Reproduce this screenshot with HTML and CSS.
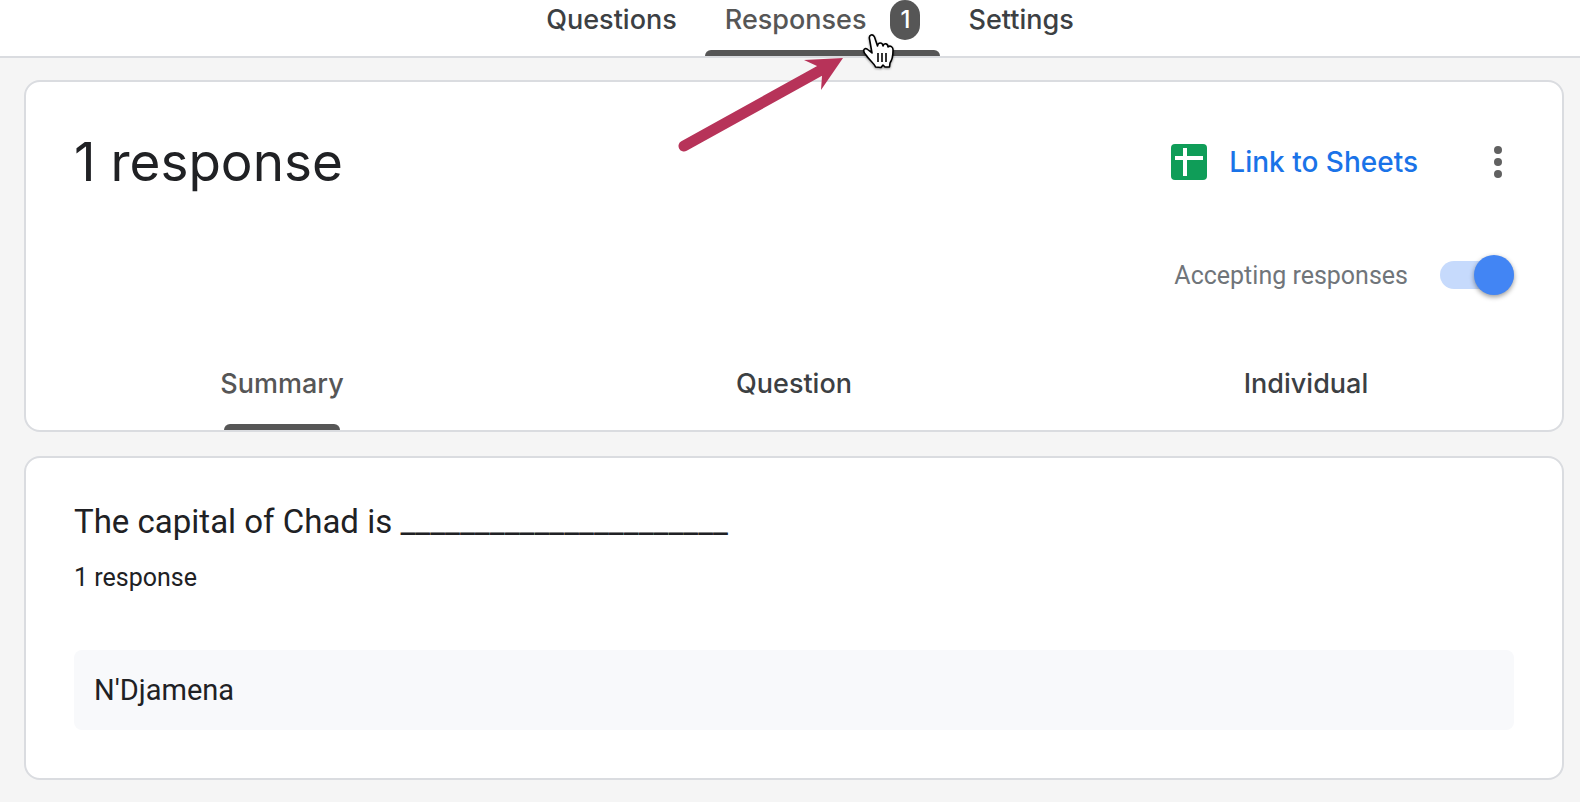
FILE: index.html
```html
<!DOCTYPE html>
<html lang="en">
<head>
    <meta charset="utf-8">
    <meta name="viewport" content="width=device-width, initial-scale=1">
    <title>Responses</title>
    <link rel="stylesheet" href="styles.css">
</head>
<body>
    <header class="topbar">
        <nav class="tabs">
            <button class="tab" type="button">Questions</button>
            <div class="tab-wrap">
                <button class="tab active" type="button">Responses <span class="badge">1</span></button>
                <svg class="arrow" width="170" height="104" viewBox="0 0 170 104">
                    <path d="M10 96 L149 19" stroke="#b73359" stroke-width="11" stroke-linecap="round"/>
                    <path d="M169 8 L130 10 L143 16 L148 26 L147 40 Z" fill="#b73359"/>
                </svg>
                <svg class="cursor" width="36" height="40" viewBox="0 0 36 40">
                    <path d="M10 21 L7.500 7 C6.500 2.500 11 1.500 12.500 5 L15.500 14 C16 10 20.500 10 21 14 C22 10.500 26 11.500 26 15 C28 13 31.500 14.500 31 19 C31 25 30 28 28 31 L27.500 35 L23 35 L21 33 L19 35.500 L13.500 35 C12 31 7 28 4 23 C0 19 2 15.500 5 17 Z" fill="#fff" stroke="#000" stroke-width="1.600" stroke-linejoin="round"/>
                    <path d="M16 21 V30 M20 21 V30 M24 21 V30" stroke="#000" stroke-width="1.600"/>
                </svg>
            </div>
            <button class="tab" type="button">Settings</button>
        </nav>
    </header>

    <main>
        <section class="card overview">
            <div class="row">
                <h1>1 response</h1>
                <div class="actions">
                    <a class="sheets" href="#">
                        <svg width="36" height="36" viewBox="0 0 36 36">
                            <rect width="36" height="36" rx="4" fill="#0f9d58"/>
                            <path d="M12 4h4v8h16v4H16v16h-4V16H4v-4h8z" fill="#fff"/>
                        </svg>
                        Link to Sheets
                    </a>
                    <button class="more" type="button" aria-label="More options">
                        <svg width="8" height="32" viewBox="0 0 8 32" fill="#616161">
                            <circle cx="4" cy="4" r="4"/>
                            <circle cx="4" cy="16" r="4"/>
                            <circle cx="4" cy="28" r="4"/>
                        </svg>
                    </button>
                </div>
            </div>
            <div class="accepting">
                <label for="accepting">Accepting responses</label>
                <input class="toggle" id="accepting" type="checkbox" checked>
            </div>
            <nav class="views">
                <button class="view active" type="button">Summary</button>
                <button class="view" type="button">Question</button>
                <button class="view" type="button">Individual</button>
            </nav>
        </section>

        <section class="card question">
            <h2>The capital of Chad is ______________________</h2>
            <p class="count">1 response</p>
            <div class="answer">N'Djamena</div>
        </section>
    </main>
</body>
</html>
```
FILE: styles.css
```css
* {
    box-sizing: border-box;
}

body {
    margin: 0;
    background: #f5f5f5;
    color: #202124;
    font-family: Roboto, sans-serif;
}

button {
    padding: 0;
    border: none;
    background: none;
    color: #3c4043;
    font: 500 27px/40px Inter, sans-serif;
}

.topbar {
    height: 58px;
    padding-left: 40px;
    background: #fff;
    border-bottom: 2px solid #dadce0;
}

.tabs {
    display: flex;
    justify-content: center;
    height: 56px;
}

.tab {
    display: flex;
    height: 56px;
    padding: 0 28px;
}

.tab-wrap {
    position: relative;
}

.tab.active {
    gap: 24px;
    padding: 0 20px;
}

.active {
    position: relative;
    color: #565656;
}

.active::after {
    content: "";
    position: absolute;
    right: 0;
    bottom: 0;
    left: 0;
    height: 6px;
    border-radius: 6px 6px 0 0;
    background: #565656;
}

.badge {
    width: 30px;
    height: 40px;
    border-radius: 15px;
    background: #565656;
    color: #fff;
    font-size: 24px;
}

.arrow {
    position: absolute;
    top: 50px;
    left: -31px;
    fill: none;
}

.cursor {
    position: absolute;
    top: 32px;
    right: 42px;
    filter: drop-shadow(0 1px 1px #0006);
}

main {
    display: grid;
    gap: 24px;
    padding: 22px 16px 22px 24px;
}

.card {
    background: #fff;
    border: 2px solid #dadce0;
    border-radius: 16px;
}

.row,
.actions,
.sheets,
.accepting {
    display: flex;
    align-items: center;
}

.row {
    justify-content: space-between;
    height: 80px;
    margin: 40px 48px 0;
}

h1 {
    margin: 0;
    font: 400 53px/80px Inter, sans-serif;
}

.sheets {
    gap: 22px;
    color: #1a73e8;
    font: 500 28px/40px Inter, sans-serif;
    text-decoration: none;
}

.more {
    width: 32px;
    height: 40px;
    margin-left: 64px;
}

.more svg {
    display: block;
    margin: auto;
}

.accepting {
    justify-content: flex-end;
    gap: 32px;
    height: 40px;
    margin: 53px 48px 0;
    color: #70757a;
    font-size: 25px;
}

.toggle {
    position: relative;
    width: 74px;
    height: 28px;
    margin: 0;
    border-radius: 14px;
    background: #c6dafc;
    appearance: none;
}

.toggle::after {
    content: "";
    position: absolute;
    top: -6px;
    right: 0;
    width: 40px;
    height: 40px;
    border-radius: 50%;
    background: #4285f4;
    box-shadow: 0 2px 5px #0006;
}

.views {
    display: grid;
    grid-template-columns: repeat(3, 1fr);
    justify-items: center;
    margin-top: 69px;
}

.view {
    height: 66px;
    padding-bottom: 26px;
}

.view.active::after {
    right: 4px;
    left: 4px;
}

.question {
    padding: 40px 48px 48px;
}

h2 {
    margin: 0;
    font-size: 33px;
    font-weight: 400;
    line-height: 48px;
}

.count {
    margin: 16px 0 56px;
    font-size: 25px;
    line-height: 32px;
}

.answer {
    padding: 20px;
    border-radius: 8px;
    background: #f8f9fb;
    font-size: 29px;
    line-height: 40px;
}
```
